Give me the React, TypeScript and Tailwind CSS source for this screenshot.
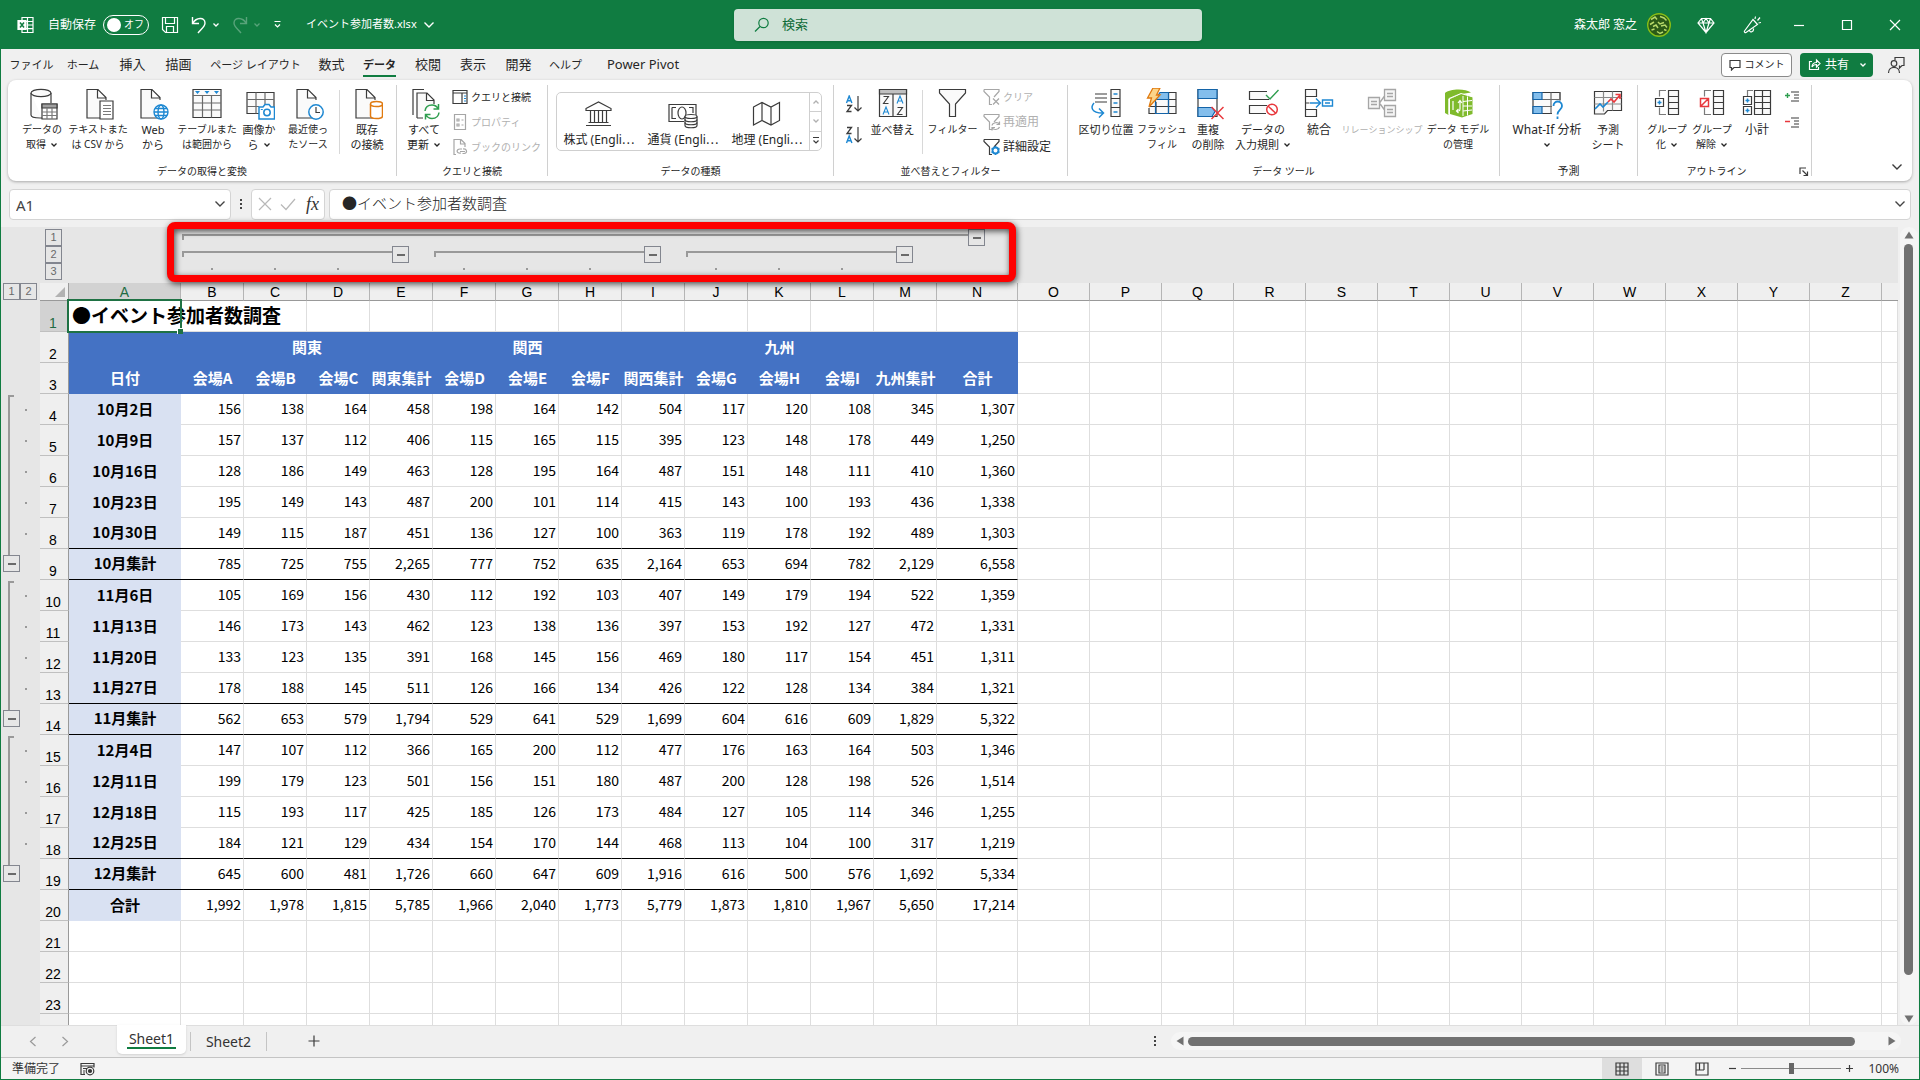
import React, { useState } from 'react';

type IconProps = { children: React.ReactNode; w?: number; h?: number; dx?: number; className?: string };

const Svg: React.FC<IconProps> = ({ children, w = 32, h = 32, dx = 0, className = '' }) => (
  <svg width={w} height={h} viewBox={`${-dx} 0 ${w} ${h}`} fill="none" stroke="#3b3b3b" strokeWidth="1.2" className={`shrink-0 ${className}`} aria-hidden="true">
    {children}
  </svg>
);

const Chevron: React.FC<{ className?: string; big?: boolean }> = ({ className = '', big }) =>
  big ? (
    <svg width="12" height="8" viewBox="0 0 12 8" fill="none" stroke="currentColor" strokeWidth="1.4" className={`shrink-0 ${className}`} aria-hidden="true">
      <path d="M1.5 1.5 6 6l4.500-4.500" />
    </svg>
  ) : (
    <svg width="8" height="6" viewBox="0 0 8 6" fill="none" stroke="currentColor" strokeWidth="1.3" className={`shrink-0 ${className}`} aria-hidden="true">
      <path d="M1.500 1.500 4 4l2.500-2.500" />
    </svg>
  );

const Doc = () => <path d="M20 30H2V1.500h11l8 8V12M12.500 1.500V10H21" fill="#fafafa" />;

const BigIcons = {
  getData: (
    <Svg dx={1}>
      <path d="M4 5v22c0 2 4 3 9 3h2M24 5v10" fill="#fafafa" />
      <ellipse cx="14" cy="5" rx="10" ry="3.700" fill="#fafafa" />
      <path d="M15 16h15v15H15z" fill="#fff" />
      <path d="M15 16h15v4H15z" fill="#a0a0a0" />
      <path d="M20 20v11M25 20v11M15 24h15M15 27.500h15" stroke="#7a7a7a" />
    </Svg>
  ),
  text: (
    <Svg dx={3}>
      <Doc />
      <path d="M15 13h13v18H15z" fill="#fff" />
      <path d="M18 17.500h8M18 20.500h8M18 23.500h8M18 26.500h8" stroke="#7a7a7a" />
    </Svg>
  ),
  web: (
    <Svg dx={2}>
      <Doc />
      <g stroke="#1e88d2" strokeWidth="1.400">
        <circle cx="22" cy="24" r="7" fill="#fff" />
        <ellipse cx="22" cy="24" rx="3" ry="7" />
        <path d="M15 24h14M16 20.500h12M16 27.500h12" />
      </g>
    </Svg>
  ),
  table: (
    <Svg>
      <path d="M2 1.500h28v28H2z" fill="#fafafa" />
      <path d="M2 7.500h28M2 15h28M2 22h28M11.500 7.500v22M20.500 7.500v22" stroke="#6a6a6a" />
      <path d="M4 3h5L6.500 6zM13.500 3h5L16 6zM23 3h5l-2.500 3z" fill="#1e88d2" stroke="none" />
    </Svg>
  ),
  picture: (
    <Svg dx={2}>
      <path d="M2 4.500h27v21H2z" fill="#fafafa" />
      <path d="M2 11.500h27M2 18.500h12M11 4.500v21M20 4.500v12" stroke="#6a6a6a" />
      <path d="M14 19h4l2-2.500h4l2 2.500h3.500v12H14z" fill="#fff" stroke="#1e88d2" strokeWidth="1.500" />
      <circle cx="22" cy="24.500" r="3.200" stroke="#1e88d2" strokeWidth="1.500" />
      <path d="M15.800 21.500h2" stroke="#1e88d2" />
    </Svg>
  ),
  recent: (
    <Svg dx={3}>
      <Doc />
      <circle cx="21" cy="24" r="7.200" fill="#fff" stroke="#1e88d2" strokeWidth="1.500" />
      <path d="M21 19v5.500h4" />
    </Svg>
  ),
  existing: (
    <Svg dx={3}>
      <Doc />
      <path d="M16.500 16v12c0 1.500 2.500 2.500 6 2.500s6-1 6-2.500V16" fill="#fff" stroke="#e07a10" strokeWidth="1.500" />
      <ellipse cx="22.500" cy="16" rx="6" ry="2.500" fill="#fff" stroke="#e07a10" strokeWidth="1.500" />
    </Svg>
  ),
  refresh: (
    <Svg dx={2}>
      <path d="M3 27V1.500h11" />
      <path d="M7 30V5h10l7 7v4M7 30h6M16.500 5v7.500H24" fill="#fafafa" />
      <g stroke="#2f9e4f" strokeWidth="1.500">
        <path d="M15 23c.5-4 3.500-6 7-6 3 0 5 1.500 6.300 4M28.500 16v5h-5M29 24.500c-.5 4-3.500 6-7 6-3 0-5-1.500-6.300-4M15.500 31.500v-5h5" />
      </g>
    </Svg>
  ),
  sort: (
    <Svg>
      <path d="M2.500 1.500h27v27h-27z" fill="#fafafa" />
      <path d="M2.500 1.500h27V6h-27z" fill="#c0c0c0" />
      <path d="M16 6v22.500" />
      <g strokeWidth="1.100">
        <path d="M6.500 8.500h5l-5 7h5M20.500 19.500h5l-5 7h5" />
        <path d="m6 26.500 3-7.500 3 7.500M7 24h4M20 15.500 23 8l3 7.500M21 13h4" stroke="#1e88d2" />
      </g>
    </Svg>
  ),
  filter: (
    <Svg>
      <path d="M2.500 1.500h26V5l-10 11v12.500h-6V16L2.500 5z" fill="#fafafa" />
    </Svg>
  ),
  split: (
    <Svg>
      <path d="M5 6h12M5 10h12M5 14h12" />
      <path d="M21 1.500h9v27h-9zM21 10.500h9M21 19.500h9" fill="#fafafa" />
      <path d="M23.500 6h4M23.500 15h4M23.500 24h4" stroke="#1e88d2" strokeWidth="1.500" />
      <path d="M4 15c-3.500 4-3 10 8.500 10M9 20.500l4.500 4.500-4.500 4.500" stroke="#1e88d2" strokeWidth="1.500" />
    </Svg>
  ),
  flash: (
    <Svg>
      <path d="M3 20v5.500h27V4.500H14" fill="#fafafa" />
      <path d="M3 25.500h27M3 18.500h27M8 11.500h22M22.500 4.500v21M10 14v11.500" />
      <path d="M14 4.500h8.500v7H9z" fill="#83beec" stroke="#1464a8" />
      <path d="M9.500 11.500h13v14h-13z" stroke="#1464a8" />
      <path d="M7 0h7l-3.500 7H14L3 19l2.500-9H1.500z" fill="#fbd58a" stroke="#e07a10" strokeWidth="1.300" />
    </Svg>
  ),
  dup: (
    <Svg dx={2}>
      <path d="M4 1.500h19v27H4z" fill="#fff" />
      <path d="M4 1.500h19v9H4zM4 19.500h14l3 4-3 5H4z" fill="#83beec" stroke="#1464a8" />
      <path d="m17.500 19 12 12M29.500 19l-12 12" stroke="#e8383d" strokeWidth="1.500" />
    </Svg>
  ),
  validate: (
    <Svg>
      <path d="M20 3.500H2.500v8H22M20 17.500H2.500v8H19" fill="#fafafa" />
      <path d="m19 7 4 4L31.500 2" stroke="#2f9e4f" strokeWidth="1.400" />
      <circle cx="25" cy="21.500" r="5.300" fill="#fff" stroke="#e8383d" strokeWidth="1.500" />
      <path d="m21 18 8 7.500" stroke="#e8383d" strokeWidth="1.500" />
    </Svg>
  ),
  consolidate: (
    <Svg>
      <path d="M2.500 1.500h11v7h-11zM2.500 21.500h11v7h-11zM2.500 8.500v13" fill="#fafafa" />
      <path d="M2.500 15h4" stroke="#3b3b3b" />
      <path d="M7 15h10M13 10.500l4.500 4.500-4.500 4.500M19.500 12h10v6h-10zM22 15h5" stroke="#1e88d2" strokeWidth="1.400" />
    </Svg>
  ),
  relation: (
    <Svg>
      <g stroke="#a6a6a6" fill="#f5f5f5" strokeWidth="1.300">
        <path d="M2.500 9.500h11v11h-11zM18.500 1.500h11v11h-11zM18.500 17.500h11v11h-11zM13.500 15l5-7M13.500 15l5 7" />
        <path d="M5 13.500h6M5 16.500h6M21 5.500h6M21 8.500h6M21 21.500h6M21 24.500h6" />
      </g>
    </Svg>
  ),
  model: (
    <Svg dx={1}>
      <path d="M2 5C6 1 22 0 28 4.500L16 6.500 5.500 11v16L2 25z" fill="#7fba2c" stroke="none" />
      <path d="M7 11 19 5.500l10.500 3.500v17L19 29.500 7 26z" fill="#7fba2c" stroke="none" />
      <path d="M6 26.500v-16L18 5.500l12 3.500" stroke="#fff" strokeWidth="1" />
      <path d="M20 8v20M20 13.500l9-1M20 18h9M20 23l9-1M24.500 8.500v19" stroke="#fff" strokeWidth="1" />
      <path d="M10 13v9M13.500 23h2c1 0 1.500-1 1.500-2v-8M15 15l2-2.500 2 2.500M15.500 21l-2 2 2 2" stroke="#fff" strokeWidth="1.200" />
    </Svg>
  ),
  whatif: (
    <Svg>
      <path d="M2 4.500h27v21H2z" fill="#fafafa" />
      <path d="M2 11.500h27M2 18.500h27M20 4.500v21M29 4.500v21" stroke="#6a6a6a" />
      <path d="M2 4.500h9v7H2zM2 18.500h9v7H2z" fill="#83beec" stroke="#1464a8" />
      <path d="M21 12.500h11V32H21z" fill="#fff" stroke="none" />
      <path d="M22.500 18c0-6 8.500-6 8.500 0 0 4-4.500 4-4.500 8.500M26.500 28.500v2.500" stroke="#1e88d2" strokeWidth="1.800" />
    </Svg>
  ),
  forecast: (
    <Svg>
      <path d="M2.500 3.500h27v19h-14l-3 3.500h-10z" fill="#fafafa" />
      <path d="M2.500 9.500h27M2.500 16h27M11.500 3.500v20M20.500 3.500v19" stroke="#8a8a8a" />
      <path d="m3 21 5-5 3 3 5-5" stroke="#1e88d2" strokeWidth="1.600" />
      <path d="m16 14 3-3 3 3 6-7M23.500 6.500h4.500V11" stroke="#e8383d" strokeWidth="1.600" />
    </Svg>
  ),
  group: (
    <Svg w={28}>
      <path d="M13 2.500H6.500v6M13 26.500H6.500v-7" stroke="#7a7a7a" />
      <path d="M2.500 10.500h8v8h-8z" />
      <path d="M6.500 12.500v4M4.500 14.500h4" stroke="#1e88d2" strokeWidth="1.500" />
      <path d="M15.500 2.500h10v24h-10zM15.500 8.500h10M15.500 14.500h10M15.500 20.500h10" fill="#fafafa" />
    </Svg>
  ),
  ungroup: (
    <Svg w={28}>
      <path d="M13 2.500H6.500v6M13 26.500H6.500v-7" stroke="#7a7a7a" />
      <path d="M2.500 10.500h8v8h-8zM3 18l7-7" stroke="#e8383d" strokeWidth="1.500" />
      <path d="M15.500 2.500h10v24h-10zM15.500 8.500h10M15.500 14.500h10M15.500 20.500h10" fill="#fafafa" />
    </Svg>
  ),
  subtotal: (
    <Svg>
      <path d="M12 2.500H6.500v6" stroke="#7a7a7a" />
      <path d="M2.500 8.500h8v8h-8zM2.500 18.500h8v8h-8z" />
      <path d="M6.500 10.500v4M4.500 12.500h4M6.500 20.500v4M4.500 22.500h4" stroke="#1e88d2" strokeWidth="1.500" />
      <path d="M13.500 2.500h16v24h-16zM13.500 8.500h16M13.500 14.500h16M13.500 20.500h16M21.500 2.500v24" fill="#fafafa" />
    </Svg>
  ),
};

const SortIcon: React.FC<{ desc?: boolean }> = ({ desc }) => (
  <Svg w={18} h={18}>
    <path d="m1.500 8 2.700-7 2.700 7M2.500 5.700h3.500" stroke="#1e88d2" strokeWidth="1.400" transform={desc ? 'translate(0 9)' : undefined} />
    <path d="M2 10.500h4.500L2 16.500h4.500" strokeWidth="1.300" transform={desc ? 'translate(0 -9)' : undefined} />
    <path d="M13 1v15M9.500 12.500 13 16l3.500-3.500" />
  </Svg>
);

const FilterSmall: React.FC<{ kind: 'clear' | 'reapply' | 'adv' }> = ({ kind }) => (
  <Svg w={18} h={18}>
    <path d="M1 1.500h15v2l-5 5.500M1 1.500v2L6.500 9v7.500H9" stroke={kind === 'adv' ? '#3b3b3b' : '#a6a6a6'} />
    {kind === 'clear' && <path d="m10 10.500 6 6M16 10.500l-6 6" stroke="#a6a6a6" />}
    {kind === 'reapply' && <path d="M9 12.500c.5-3 6-4 7.500-1M16.500 8.500v3h-3M16.500 14c-1 3-6 3.500-7.500.5M9 17.500v-3h3" stroke="#a6a6a6" />}
    {kind === 'adv' && (
      <g stroke="#1e88d2">
        <circle cx="12.500" cy="12.500" r="3" strokeWidth="1.800" />
        <path d="M12.500 8v2M12.500 15v2M8.500 10.500l2 1M14.500 13.500l2 1M8.500 14.500l2-1M14.500 11.500l2-1" strokeWidth="1.500" />
      </g>
    )}
  </Svg>
);

const BigButton: React.FC<{
  icon: React.ReactNode;
  lines: string[];
  width: string;
  size?: string;
  menu?: boolean;
  disabled?: boolean;
}> = ({ icon, lines, width, size = 'text-[11px]', menu, disabled }) => (
  <button disabled={disabled} className={`flex shrink-0 flex-col items-center ${width} ${size} ${disabled ? 'text-[#b0b0b0]' : 'text-[#262626]'}`}>
    {icon}
    <span className="mt-0.5 flex flex-col items-center leading-[15px] whitespace-nowrap">
      {lines.map((line, i) => (
        <span key={i} className="flex h-[15px] items-center gap-1">
          {line}
          {menu && i === lines.length - 1 && <Chevron />}
        </span>
      ))}
    </span>
  </button>
);

const SmallButton: React.FC<{ icon: React.ReactNode; label: string; size?: string; disabled?: boolean }> = ({ icon, label, size = 'text-[10px]', disabled }) => (
  <button disabled={disabled} className={`flex h-[18px] items-center gap-0.5 whitespace-nowrap ${size} ${disabled ? 'text-[#b0b0b0]' : 'text-[#262626]'}`}>
    {icon}
    {label}
  </button>
);

const Group: React.FC<{ caption: string; pad?: string; size?: string; launcher?: boolean; children: React.ReactNode }> = ({
  caption,
  pad = '',
  size = 'text-[10px]',
  launcher,
  children,
}) => (
  <>
    <section className="flex shrink-0 flex-col pt-2">
      <div className={`flex h-[75px] items-start ${pad}`}>{children}</div>
      <div className={`relative h-4 text-center leading-4 text-[#262626] ${size} ${launcher ? 'pr-4' : ''}`}>
        {caption}
        {launcher && (
          <button aria-label="アウトラインの設定" className="absolute top-1 right-0.5">
            <Svg w={10} h={10}>
              <path d="M1 7V1h6M3.500 3.500l5 5M8.500 4.500v4h-4" />
            </Svg>
          </button>
        )}
      </div>
    </section>
    <div className="my-[5px] w-px shrink-0 bg-[#d0d0d0]" />
  </>
);

const InnerLine: React.FC<{ className?: string }> = ({ className = '' }) => <div className={`mt-0.5 h-16 w-px shrink-0 bg-[#d8d8d8] ${className}`} />;

const TitleBar = () => {
  const [autoSave, setAutoSave] = useState(false);
  return (
    <header className="flex h-[49px] shrink-0 items-center bg-[#107c41] text-white">
      <div className="flex flex-1 items-center pl-4 text-[12px]">
        <Svg w={18} h={18}>
          <g stroke="#fff">
            <path d="M5 4V1.500h11v15H5V14M10.500 1.500v15M5 5.500h11M11 9h5M5 12.700h11" />
            <path d="M1 4.500h8v9H1z" fill="#fff" />
            <path d="m3 6.500 4 5M7 6.500l-4 5" stroke="#107c41" strokeWidth="1.500" />
          </g>
        </Svg>
        <span className="ml-[13px]" id="autosave">自動保存</span>
        <button
          role="switch"
          aria-checked={autoSave}
          aria-labelledby="autosave"
          onClick={() => setAutoSave(!autoSave)}
          className="ml-[7px] flex h-5 w-[46px] items-center justify-between rounded-full border border-white pr-1 pl-[3px] text-[10px]"
        >
          <span className="size-3.5 rounded-full bg-white" />
          {autoSave ? 'オン' : 'オフ'}
        </button>
        <button aria-label="上書き保存" className="ml-3">
          <Svg w={18} h={18}>
            <path d="M1.500 1.500h15v15h-12l-3-3zM4.500 1.500v6h9v-6M5.500 16.500v-6h7v6" stroke="#fff" />
          </Svg>
        </button>
        <button aria-label="元に戻す" className="ml-3 flex items-center gap-1">
          <Svg w={17} h={18}>
            <path d="M1.500 1v6.500H8M2 7C5 1.500 14 .5 14 7c0 4-4 6-7 10" stroke="#fff" strokeWidth="1.400" />
          </Svg>
          <Chevron />
        </button>
        <button aria-label="やり直し" className="ml-3 flex items-center gap-1 text-[#58a37a]" disabled>
          <Svg w={17} h={18}>
            <path d="M14.500 1v6.500H8M14 7C11 1.500 2 .5 2 7c0 4 4 6 7 10" stroke="#58a37a" strokeWidth="1.400" />
          </Svg>
          <Chevron />
        </button>
        <button aria-label="クイック アクセスのカスタマイズ" className="ml-3">
          <Svg w={9} h={9}>
            <path d="M1.500 1.500h6M2 4.500 4.500 7 7 4.500" stroke="#fff" />
          </Svg>
        </button>
        <button className="ml-6 flex items-center gap-1.5 text-[11px]">
          イベント参加者数.xlsx <Chevron big />
        </button>
      </div>
      <label className="flex h-8 w-[468px] items-center gap-3 rounded bg-[#cfe2d7] pl-5 shadow-sm">
        <Svg w={16} h={16}>
          <circle cx="9.500" cy="6" r="4.700" stroke="#107c41" />
          <path d="m6 9.500-5 5" stroke="#107c41" />
        </Svg>
        <input aria-label="検索" placeholder="検索" className="min-w-0 flex-1 bg-transparent text-[13px] outline-none placeholder:text-[#0e6b38]" />
      </label>
      <div className="flex flex-1 items-center justify-end text-[12px]">
        <span>森太郎 窓之</span>
        <Svg w={24} h={24} className="ml-2.5">
          <circle cx="12" cy="12" r="12" fill="#2b5a17" stroke="none" />
          <g stroke="#b7d96a" strokeWidth="1.500">
            <path d="M4 6.500 8 4l2 2.500M13 3.500l4 1.500 2.500 2.500M3 11.500l4-2.500M11 9l2 2 4-1.500M6 13.500l3-1.500 2 3M14 13l4-1 2 2.500M4.500 17l3-1M10 18.500l3 2 3-1.500M17 16.500l2.500 1" />
          </g>
          <circle cx="12" cy="12" r="11.300" stroke="#86c01a" strokeWidth="1.400" />
        </Svg>
        <button aria-label="Premium" className="ml-[26px]">
          <Svg w={18} h={18}>
            <path d="M4.500 2.500h9L17 7l-8 9.500L1 7zM1 7h16M4.500 2.500 6 7l3 9.500L12 7l1.500-4.500M6 7l3-4.500L12 7" stroke="#fff" />
          </Svg>
        </button>
        <button aria-label="新機能" className="ml-7">
          <Svg w={18} h={18}>
            <path d="M1.500 15 10 3.500l4.500 5L3 16.500c-1 .5-2-.5-1.500-1.500zM6.500 14.500c.5 2.500 4.500 1.500 4-2M12 3l.5-2.500M14.500 4.500l2.500-3M15.500 7l2.500-.5" stroke="#fff" />
          </Svg>
        </button>
        <button aria-label="最小化" className="ml-8">
          <Svg w={12} h={12}>
            <path d="M1 6.500h10" stroke="#fff" />
          </Svg>
        </button>
        <button aria-label="元のサイズに戻す" className="ml-9">
          <Svg w={12} h={12}>
            <path d="M1.500 1.500h9v9h-9z" stroke="#fff" />
          </Svg>
        </button>
        <button aria-label="閉じる" className="mr-[18px] ml-9">
          <Svg w={12} h={12}>
            <path d="m1 1 10 10M11 1 1 11" stroke="#fff" />
          </Svg>
        </button>
      </div>
    </header>
  );
};

const ribbonTabs = [
  { label: 'ファイル', cls: 'w-[51px] text-[11px]' },
  { label: 'ホーム', cls: 'w-[52px] text-[11px]' },
  { label: '挿入', cls: 'w-[47px] text-[13px]' },
  { label: '描画', cls: 'w-[45px] text-[13px]' },
  { label: 'ページ レイアウト', cls: 'w-[109px] text-[11px]' },
  { label: '数式', cls: 'w-[43px] text-[13px]' },
  { label: 'データ', cls: 'w-[53px] text-[11px]' },
  { label: '校閲', cls: 'w-[44px] text-[13px]' },
  { label: '表示', cls: 'w-[46px] text-[13px]' },
  { label: '開発', cls: 'w-[45px] text-[13px]' },
  { label: 'ヘルプ', cls: 'w-[49px] text-[11px]' },
  { label: 'Power Pivot', cls: 'w-[106px] text-[13px]' },
];

const RibbonTabs = () => {
  const [active, setActive] = useState('データ');
  return (
    <nav className="flex h-[31px] shrink-0 items-center justify-between pr-3.5 pl-[5px] text-[#262626]">
      <div className="flex h-full">
        {ribbonTabs.map(t => (
          <button key={t.label} onClick={() => setActive(t.label)} className={`flex shrink-0 justify-center whitespace-nowrap ${t.cls}`}>
            <span className={`flex h-7 items-center border-b-2 pt-1.5 ${t.label === active ? 'border-[#107c41] font-bold' : 'border-transparent'}`}>{t.label}</span>
          </button>
        ))}
      </div>
      <div className="flex items-center">
        <button className="flex h-6 w-[71px] items-center justify-center gap-1 rounded border border-[#8a8a8a] bg-white text-[10px]">
          <Svg w={12} h={12}>
            <path d="M1 1.500h10v7H5L2.500 11V8.500H1z" />
          </Svg>
          コメント
        </button>
        <button className="ml-2 flex h-6 w-[73px] items-center rounded bg-[#107c41] pl-2 text-[12px] text-white">
          <Svg w={13} h={13}>
            <path d="M4 3.500H1.500v8h9V9M4 9c0-3 2-4.500 4.500-4.500V2L12 5.500 8.500 9V6.500C6.500 6.500 5 7 4 9z" stroke="#fff" />
          </Svg>
          <span className="ml-1">共有</span>
          <Chevron className="ml-2.5" />
        </button>
        <button aria-label="連絡先" className="ml-3.5">
          <Svg w={18} h={18}>
            <path d="M8 4V1.500h9v8h-2l-2.500 2.500V9.500" />
            <circle cx="7" cy="7.500" r="2.800" />
            <path d="M1.500 17c0-7.500 11-7.500 11 0" />
          </Svg>
        </button>
      </div>
    </nav>
  );
};

const Ribbon = () => (
  <div className="relative mx-[7px] flex h-[101px] shrink-0 overflow-hidden rounded-lg bg-white shadow-[0_1px_3px_rgba(0,0,0,0.3)]">
    <Group caption="データの取得と変換" pad="pl-1.5 pr-[9px]">
      <BigButton icon={BigIcons.getData} lines={['データの', '取得']} width="w-[56px]" size="text-[10px]" menu />
      <BigButton icon={BigIcons.text} lines={['テキストまた', 'は CSV から']} width="w-[56px]" size="text-[10px]" />
      <BigButton icon={BigIcons.web} lines={['Web', 'から']} width="w-[54px]" />
      <BigButton icon={BigIcons.table} lines={['テーブルまた', 'は範囲から']} width="w-[54px]" size="text-[10px]" />
      <BigButton icon={BigIcons.picture} lines={['画像か', 'ら']} width="w-[50px]" size="text-[11px]" menu />
      <BigButton icon={BigIcons.recent} lines={['最近使っ', 'たソース']} width="w-[48px]" size="text-[10px]" />
      <InnerLine className="mx-[7px]" />
      <BigButton icon={BigIcons.existing} lines={['既存', 'の接続']} width="w-[40px]" />
    </Group>
    <Group caption="クエリと接続">
      <BigButton icon={BigIcons.refresh} lines={['すべて', '更新']} width="w-[54px]" menu />
      <div className="flex w-[96px] flex-col gap-[7px] pl-px">
        <SmallButton
          label="クエリと接続"
          icon={
            <Svg w={17} h={16}>
              <path d="M1 1.500h14v13H1zM1 4h14" />
              <path d="M10 4v10.500" />
              <path d="M12 7h2M12 9.500h2M12 12h2" stroke="#1e88d2" />
            </Svg>
          }
        />
        <SmallButton
          disabled
          label="プロパティ"
          icon={
            <Svg w={17} h={16}>
              <path d="M2.500.5h11v15h-11z" stroke="#a6a6a6" />
              <path d="M5 5h2v2H5zM5 10h2v2H5zM9.500 6h2M9.500 11h2" stroke="#a6a6a6" />
            </Svg>
          }
        />
        <SmallButton
          disabled
          label="ブックのリンク"
          icon={
            <Svg w={17} h={16}>
              <path d="M4 15.500H2V.5h7l4 4V8M8.500.5V5H13" stroke="#a6a6a6" />
              <path d="M9 14c-5 1-5-4-1-4h2M11 10c4-.5 5 4 1 4.500h-1.500M8 12.500h5" stroke="#a6a6a6" />
            </Svg>
          }
        />
      </div>
    </Group>
    <Group caption="データの種類" pad="pl-2 pr-[11px]">
      <div className="mt-1 flex h-[59px] w-[266px] rounded-[5px] border border-[#cfcfcf]">
        {[
          {
            label: '株式 (Engli',
            icon: <path d="M2 7.500 14.500 1 27 7.500v2H2zM2 24.500h25M4.500 21.500h20M6.500 10v11M10.500 10v11M14.500 10v11M18.500 10v11M22.500 10v11" />,
          },
          {
            label: '通貨 (Engli',
            icon: (
              <>
                <path d="M16 20.500H1v-17h27V14M4 6.500h4M21 6.500h4V12M4 6.500v11h4" />
                <ellipse cx="14" cy="12" rx="4" ry="6" />
                <path d="M17 15.500v9c0 3 12 3 12 0v-9" fill="#fff" />
                <ellipse cx="23" cy="15.500" rx="6" ry="2" fill="#fff" />
                <path d="M17 18.500c0 3 12 3 12 0M17 21.500c0 3 12 3 12 0" />
              </>
            ),
          },
          {
            label: '地理 (Engli',
            icon: <path d="m1.500 6 8.500-4.500L19 6l8.500-4.500v18L19 24l-9-4.500L1.500 24zM10 1.500v18M19 6v18" />,
          },
        ].map(item => (
          <button key={item.label} className="flex w-[84px] shrink-0 flex-col items-center pt-2 text-[12px] text-[#262626]">
            <Svg w={30} h={28}>
              {item.icon}
            </Svg>
            <span className="mt-0.5 leading-4 whitespace-nowrap">
              {item.label}
              <span className="font-['Noto_Sans_CJK_JP',sans-serif]">…</span>
            </span>
          </button>
        ))}
        <div className="flex w-3 flex-col divide-y divide-[#cfcfcf] border-l border-[#cfcfcf]">
          <button aria-label="上へ" className="flex flex-1 items-center justify-center text-[#b0b0b0]">
            <Chevron className="rotate-180" />
          </button>
          <button aria-label="下へ" className="flex flex-1 items-center justify-center text-[#b0b0b0]">
            <Chevron />
          </button>
          <button aria-label="その他" className="flex flex-1 items-center justify-center">
            <Svg w={8} h={9}>
              <path d="M1 1.500h6M1.500 4.500 4 7l2.500-2.500" />
            </Svg>
          </button>
        </div>
      </div>
    </Group>
    <Group caption="並べ替えとフィルター" pad="pl-[11px]">
      <div className="flex w-[18px] flex-col gap-[13px] pt-[7px]">
        <button aria-label="昇順">
          <SortIcon />
        </button>
        <button aria-label="降順">
          <SortIcon desc />
        </button>
      </div>
      <BigButton icon={BigIcons.sort} lines={['並べ替え']} width="w-[59px]" />
      <InnerLine />
      <BigButton icon={BigIcons.filter} lines={['フィルター']} width="w-[59px]" size="text-[10px]" />
      <div className="flex w-[85px] flex-col gap-[7px] pl-px">
        <SmallButton disabled label="クリア" icon={<FilterSmall kind="clear" />} />
        <SmallButton disabled label="再適用" size="text-[12px]" icon={<FilterSmall kind="reapply" />} />
        <SmallButton label="詳細設定" size="text-[12px]" icon={<FilterSmall kind="adv" />} />
      </div>
    </Group>
    <Group caption="データ ツール" pad="pl-[5px] pr-1">
      <BigButton icon={BigIcons.split} lines={['区切り位置']} width="w-[66px]" />
      <BigButton icon={BigIcons.flash} lines={['フラッシュ', 'フィル']} width="w-[46px]" size="text-[10px]" />
      <BigButton icon={BigIcons.dup} lines={['重複', 'の削除']} width="w-[46px]" />
      <BigButton icon={BigIcons.validate} lines={['データの', '入力規則']} width="w-[64px]" size="text-[11px]" menu />
      <BigButton icon={BigIcons.consolidate} lines={['統合']} width="w-[48px]" size="text-[12px]" />
      <BigButton icon={BigIcons.relation} lines={['リレーションシップ']} width="w-[78px]" size="text-[9px]" disabled />
      <BigButton icon={BigIcons.model} lines={['データ モデル', 'の管理']} width="w-[74px]" size="text-[10px]" />
    </Group>
    <Group caption="予測" pad="pl-[7px] pr-2" size="text-[11px]">
      <BigButton icon={BigIcons.whatif} lines={['What-If 分析', '']} width="w-[80px]" size="text-[12px]" menu />
      <BigButton icon={BigIcons.forecast} lines={['予測', 'シート']} width="w-[42px]" />
    </Group>
    <Group caption="アウトライン" pad="pl-1.5" launcher>
      <BigButton icon={BigIcons.group} lines={['グループ', '化']} width="w-[46px]" size="text-[10px]" menu />
      <BigButton icon={BigIcons.ungroup} lines={['グループ', '解除']} width="w-[44px]" size="text-[10px]" menu />
      <BigButton icon={BigIcons.subtotal} lines={['小計']} width="w-[46px]" size="text-[12px]" />
      <div className="flex w-[31px] flex-col gap-3 pt-0.5 pl-1">
        <button aria-label="詳細データの表示">
          <Svg w={16} h={14}>
            <path d="M7 2h8M10 5h5M10 8h5M7 11h8" />
            <path d="M3.500 3v5M1 5.500h5" stroke="#2f9e4f" strokeWidth="1.400" />
          </Svg>
        </button>
        <button aria-label="詳細を表示しない">
          <Svg w={16} h={14}>
            <path d="M7 2h8M10 5h5M10 8h5M7 11h8" />
            <path d="M1 5.500h5" stroke="#e8383d" strokeWidth="1.400" />
          </Svg>
        </button>
      </div>
    </Group>
    <button aria-label="リボンを折りたたむ" className="mt-auto mr-[9px] mb-2.5 ml-auto text-[#3b3b3b]">
      <Chevron big />
    </button>
  </div>
);

const FormulaBar = () => (
  <div className="flex h-[46px] shrink-0 items-center px-2">
    <label className="flex h-[31px] w-[222px] shrink-0 items-center rounded border border-[#d4d4d4] bg-white px-1.5">
      <input aria-label="名前ボックス" defaultValue="A1" className="w-0 flex-1 pt-0.5 text-[15px] text-[#444] outline-none" />
      <Chevron big className="-mr-0.5 text-[#444]" />
    </label>
    <Svg w={20} h={12}>
      <path d="M9 1h2v2H9zM9 5h2v2H9zM9 9h2v2H9z" fill="#444" stroke="none" />
    </Svg>
    <div className="flex h-[31px] w-[74px] shrink-0 items-center rounded border border-[#d4d4d4] bg-white pl-1.5">
      <button aria-label="キャンセル">
        <Svg w={14} h={14}>
          <path d="m1 1 12 12M13 1 1 13" stroke="#b8b8b8" />
        </Svg>
      </button>
      <button aria-label="入力" className="ml-2">
        <Svg w={16} h={14}>
          <path d="m1 7.500 5 5L15 2" stroke="#b8b8b8" />
        </Svg>
      </button>
      <button aria-label="関数の挿入" className="ml-2.5 font-['Liberation_Serif',serif] text-[18px] leading-5 text-[#333] italic">
        fx
      </button>
    </div>
    <label className="ml-1 flex h-[31px] flex-1 items-center rounded border border-[#d4d4d4] bg-white pr-1 pl-3">
      <input aria-label="数式バー" defaultValue="●イベント参加者数調査" className="w-0 flex-1 pb-0.5 font-['Noto_Sans_CJK_JP',sans-serif] text-[15px] leading-5 font-light text-[#262626] outline-none" />
      <Chevron big className="text-[#444]" />
    </label>
  </div>
);

const columns = 'ABCDEFGHIJKLMNOPQRSTUVWXYZ'.split('');
const venues = ['会場A', '会場B', '会場C', '関東集計', '会場D', '会場E', '会場F', '関西集計', '会場G', '会場H', '会場I', '九州集計', '合計'];
const records: string[][] = [
  ['10月2日', '156', '138', '164', '458', '198', '164', '142', '504', '117', '120', '108', '345', '1,307'],
  ['10月9日', '157', '137', '112', '406', '115', '165', '115', '395', '123', '148', '178', '449', '1,250'],
  ['10月16日', '128', '186', '149', '463', '128', '195', '164', '487', '151', '148', '111', '410', '1,360'],
  ['10月23日', '195', '149', '143', '487', '200', '101', '114', '415', '143', '100', '193', '436', '1,338'],
  ['10月30日', '149', '115', '187', '451', '136', '127', '100', '363', '119', '178', '192', '489', '1,303'],
  ['10月集計', '785', '725', '755', '2,265', '777', '752', '635', '2,164', '653', '694', '782', '2,129', '6,558'],
  ['11月6日', '105', '169', '156', '430', '112', '192', '103', '407', '149', '179', '194', '522', '1,359'],
  ['11月13日', '146', '173', '143', '462', '123', '138', '136', '397', '153', '192', '127', '472', '1,331'],
  ['11月20日', '133', '123', '135', '391', '168', '145', '156', '469', '180', '117', '154', '451', '1,311'],
  ['11月27日', '178', '188', '145', '511', '126', '166', '134', '426', '122', '128', '134', '384', '1,321'],
  ['11月集計', '562', '653', '579', '1,794', '529', '641', '529', '1,699', '604', '616', '609', '1,829', '5,322'],
  ['12月4日', '147', '107', '112', '366', '165', '200', '112', '477', '176', '163', '164', '503', '1,346'],
  ['12月11日', '199', '179', '123', '501', '156', '151', '180', '487', '200', '128', '198', '526', '1,514'],
  ['12月18日', '115', '193', '117', '425', '185', '126', '173', '484', '127', '105', '114', '346', '1,255'],
  ['12月25日', '184', '121', '129', '434', '154', '170', '144', '468', '113', '104', '100', '317', '1,219'],
  ['12月集計', '645', '600', '481', '1,726', '660', '647', '609', '1,916', '616', '500', '576', '1,692', '5,334'],
  ['合計', '1,992', '1,978', '1,815', '5,785', '1,966', '2,040', '1,773', '5,779', '1,873', '1,810', '1,967', '5,650', '17,214'],
];

// rows with a rule drawn under them
const ruled = [8, 9, 13, 14, 18, 19];

const OutlineBox: React.FC<{ children?: React.ReactNode; label?: string }> = ({ children, label }) => (
  <button aria-label={label} className="flex size-[17px] shrink-0 items-center justify-center border border-[#83868f] bg-[#e6e6e6] font-['Liberation_Sans',sans-serif] text-[11px] leading-none text-[#6a6a6a]">
    {children ?? <span className="h-0.5 w-2 bg-[#6a6a6a]" />}
  </button>
);

const ColumnOutline = () => (
  <div className="relative flex h-[56px] shrink-0 bg-[#e6e6e6] pt-0.5">
    <div className="ml-[44px] flex w-[136px] shrink-0 flex-col">
      <OutlineBox>1</OutlineBox>
      <OutlineBox>2</OutlineBox>
      <OutlineBox>3</OutlineBox>
    </div>
    <div>
      <div className="flex h-[17px]">
        <div className="mt-[5px] ml-px h-1.5 w-[786px] border-t-2 border-l-2 border-[#999]" />
        <OutlineBox label="折りたたむ" />
      </div>
      <div className="flex h-[17px]">
        {[0, 1, 2].map(g => (
          <div key={g} className="flex w-[252px]">
            <div className="mt-[5px] ml-px h-1.5 w-[210px] border-t-2 border-l-2 border-[#999]" />
            <OutlineBox label="折りたたむ" />
          </div>
        ))}
      </div>
      <div className="flex h-[17px]">
        {venues.slice(0, 12).map((v, i) => (
          <div key={v} className="flex w-[63px] justify-center pt-[5px] pr-0.5">
            {i % 4 !== 3 && <span className="size-0.5 bg-[#999]" />}
          </div>
        ))}
      </div>
    </div>
    <div className="absolute -top-[5px] left-[166px] z-10 h-[60px] w-[849px] rounded-lg border-[7px] border-[#fe0000] drop-shadow-[1px_2px_3px_rgba(0,0,0,0.7)]" />
  </div>
);

const RowOutline = () => (
  <div className="w-[39px] shrink-0 bg-[#e6e6e6]">
    <div className="flex h-[111px] pl-0.5">
      <OutlineBox>1</OutlineBox>
      <OutlineBox>2</OutlineBox>
    </div>
    {[5, 4, 4].map((n, g) => (
      <div key={g}>
        <div className="flex">
          <div className="mt-px ml-[7px] w-1.5 border-t-2 border-l-2 border-[#999]" />
          <div className="ml-[11px]">
            {Array.from({ length: n }, (_, i) => (
              <div key={i} className="flex h-[31px] items-center">
                <span className="size-0.5 bg-[#999]" />
              </div>
            ))}
          </div>
        </div>
        <div className="flex h-[31px]">
          <div className="ml-0.5 flex flex-col">
            <span className="ml-[5px] h-1.5 w-0.5 bg-[#999]" />
            <OutlineBox label="折りたたむ" />
          </div>
        </div>
      </div>
    ))}
  </div>
);

const grid = 'border-r border-b border-[#dedede]';
const blueHead = 'bg-[#4472c4] p-0 pb-0.5 text-[15px] leading-6 whitespace-nowrap text-white';

const Grid = () => (
  <table className="w-full table-fixed border-separate border-spacing-0 font-['Noto_Sans_CJK_JP',sans-serif] text-black">
    <colgroup>
      <col className="w-[29px]" />
      <col className="w-[112px]" />
      {columns.slice(1, 13).map(c => (
        <col key={c} className="w-[63px]" />
      ))}
      <col className="w-[81px]" />
      {columns.slice(14).map(c => (
        <col key={c} className="w-[72px]" />
      ))}
      <col />
    </colgroup>
    <thead>
      <tr className="h-[18px] bg-[#efefef] font-['Liberation_Sans',sans-serif] text-[14px] leading-4">
        <th className="border-r border-b border-[#999] p-0">
          <svg width="10" height="10" viewBox="0 0 10 10" className="mr-[3px] ml-auto" aria-hidden="true">
            <path d="M10 0v10H0z" fill="#b2b2b2" />
          </svg>
        </th>
        {columns.map(c => (
          <th key={c} className={`border-r border-b border-r-[#b5b5b5] border-b-[#999] p-0 pt-px font-normal ${c === 'A' ? 'bg-[#d2d2d2] text-[#1f6b43]' : ''}`}>
            {c}
          </th>
        ))}
        <th className="border-b border-[#999] p-0" />
      </tr>
    </thead>
    <tbody>
      {Array.from({ length: 24 }, (_, i) => i + 1).map(row => {
        const rec = records[row - 4];
        const line = ruled.includes(row) ? 'border-b-black' : '';
        return (
          <tr key={row} className="h-[31px]">
            <th
              className={`border-r border-b border-r-[#999] border-b-[#c0c0c0] p-0 pr-0.5 align-bottom font-['Liberation_Sans',sans-serif] text-[14px] leading-4 font-normal ${
                row === 1 ? 'bg-[#d2d2d2] text-[#1f6b43]' : 'bg-[#efefef]'
              }`}
            >
              {row < 24 && row}
            </th>
            {row === 1 && (
              <>
                <td className="relative p-0 pb-1 pl-[3px] text-[19px] leading-6 font-bold whitespace-nowrap">
                  ●イベント参加者数調査
                  <span className="absolute -top-0.5 -right-px -bottom-px -left-0.5 border-2 border-[#1f7244]" />
                  <span className="absolute -right-0.5 -bottom-0.5 size-1.5 border-t border-l border-white bg-[#1f7244]" />
                </td>
                <td className="border-b border-[#dedede]" />
                {columns.slice(2, 14).map(c => (
                  <td key={c} className={grid} />
                ))}
              </>
            )}
            {row === 2 && (
              <>
                <td className="bg-[#4472c4]" />
                <th colSpan={4} className={blueHead}>関東</th>
                <th colSpan={3} className={blueHead}>関西</th>
                <td className="bg-[#4472c4]" />
                <th colSpan={3} className={blueHead}>九州</th>
                <td className="bg-[#4472c4]" />
                <td className="bg-[#4472c4]" />
              </>
            )}
            {row === 3 &&
              ['日付', ...venues].map(v => (
                <th key={v} className={blueHead}>
                  {v}
                </th>
              ))}
            {rec && (
              <>
                <th className={`bg-[#d9e1f2] p-0 pb-0.5 text-[15px] leading-6 ${line ? 'border-b border-black' : ''}`}>{rec[0]}</th>
                {rec.slice(1).map((v, i) => (
                  <td key={i} className={`p-0 pr-0.5 pb-0.5 text-right text-[14px] leading-6 font-normal ${grid} ${line}`}>
                    {v}
                  </td>
                ))}
              </>
            )}
            {row > 20 && columns.slice(0, 14).map(c => <td key={c} className={grid} />)}
            {columns.slice(14).map(c => (
              <td key={c} className={grid} />
            ))}
            <td className={grid} />
          </tr>
        );
      })}
    </tbody>
  </table>
);

const Arrow: React.FC<{ className?: string }> = ({ className = '' }) => (
  <svg width="10" height="8" viewBox="0 0 10 8" className={`shrink-0 ${className}`} aria-hidden="true">
    <path d="M5 .5 9.500 7.500H.5z" fill="#717171" />
  </svg>
);

const SheetTabs = () => (
  <div className="flex h-[32px] shrink-0 items-start border-t border-[#dedede] text-[14px] text-[#333]">
    <button aria-label="前のシート" className="mt-2.5 ml-7">
      <Svg w={8} h={11}>
        <path d="M6.500 1 1.500 5.500l5 4.500" stroke="#9a9a9a" />
      </Svg>
    </button>
    <button aria-label="次のシート" className="mt-2.5 ml-6">
      <Svg w={8} h={11}>
        <path d="m1.500 1 5 4.500-5 4.500" stroke="#9a9a9a" />
      </Svg>
    </button>
    <button className="-mt-px ml-12 flex h-[29px] w-[69px] justify-center rounded-b-[5px] bg-white shadow-sm">
      <span className="flex h-6 items-center border-b-2 border-[#107c41] px-0.5 pt-1">Sheet1</span>
    </button>
    <div className="mt-1.5 ml-1 h-[19px] w-px bg-[#c4c4c4]" />
    <button className="mt-1.5 w-[75px] leading-5">Sheet2</button>
    <div className="mt-1.5 h-[19px] w-px bg-[#c4c4c4]" />
    <button aria-label="新しいシート" className="mt-[9px] ml-[41px]">
      <Svg w={12} h={12}>
        <path d="M6 .5v11M.5 6h11" />
      </Svg>
    </button>
    <div className="mt-1.5 mr-[18px] ml-auto flex items-center">
      <Svg w={4} h={12} className="mr-3.5">
        <path d="M1 1h2v2H1zM1 5h2v2H1zM1 9h2v2H1z" fill="#444" stroke="none" />
      </Svg>
      <div className="flex h-[18px] w-[38vw] items-center rounded-full bg-[#f5f5f5] px-1">
        <Arrow className="-rotate-90" />
        <div className="mr-8 ml-[3px] h-[9px] flex-1 rounded-full bg-[#717171]" />
        <Arrow className="rotate-90" />
      </div>
    </div>
  </div>
);

const StatusBar = () => (
  <footer className="flex h-[22px] shrink-0 items-center border-t border-[#c4c4c4] bg-[#f4f4f4] pl-[11px] text-[12px] text-[#333]">
    <span>準備完了</span>
    <button aria-label="マクロの記録" className="ml-5">
      <Svg w={15} h={14}>
        <path d="M5 12.500H1v-11h13v4M1 4h13M3 6.500h4M3 9h2M3 11h2" />
        <circle cx="10" cy="9" r="3.800" />
        <circle cx="10" cy="9" r="1.500" fill="#333" />
      </Svg>
    </button>
    <div className="ml-auto flex h-full items-center">
      <button aria-label="標準" className="flex h-full w-10 items-center justify-center bg-[#dedede]">
        <Svg w={14} h={14}>
          <path d="M1 1h12v12H1zM5 1v12M9 1v12M1 5h12M1 9h12" />
        </Svg>
      </button>
      <button aria-label="ページ レイアウト" className="flex h-full w-10 items-center justify-center">
        <Svg w={14} h={14}>
          <path d="M1 1h12v12H1zM4 3h6v8H4zM5.500 5h3M5.500 7h3M5.500 9h3" />
        </Svg>
      </button>
      <button aria-label="改ページ プレビュー" className="flex h-full w-10 items-center justify-center">
        <Svg w={14} h={14}>
          <path d="M1 1h12v12H1zM4.500 1v7M9 1v7M1 8h8" />
        </Svg>
      </button>
      <button aria-label="縮小" className="ml-1.5">
        <Svg w={9} h={9}>
          <path d="M1 4.500h7" />
        </Svg>
      </button>
      <input
        type="range"
        aria-label="ズーム"
        min={0}
        max={200}
        defaultValue={100}
        className="mx-1 h-3 w-[100px] appearance-none bg-[linear-gradient(#8a8a8a,#8a8a8a)] bg-[length:100%_1px] bg-center bg-no-repeat [&::-webkit-slider-thumb]:h-[11px] [&::-webkit-slider-thumb]:w-[5px] [&::-webkit-slider-thumb]:appearance-none [&::-webkit-slider-thumb]:bg-[#666]"
      />
      <button aria-label="拡大">
        <Svg w={9} h={9}>
          <path d="M1 4.500h7M4.500 1v7" />
        </Svg>
      </button>
      <span className="mr-5 ml-3.5">100%</span>
    </div>
  </footer>
);

const App: React.FC = () => (
  <div className="flex h-screen flex-col overflow-hidden border border-t-0 border-[#107c41] bg-[#f0f0f0] font-['Noto_Sans','Noto_Sans_CJK_JP',sans-serif]">
    <TitleBar />
    <RibbonTabs />
    <Ribbon />
    <FormulaBar />
    <main className="flex min-h-0 flex-1">
      <div className="flex min-w-0 flex-1 flex-col">
        <ColumnOutline />
        <div className="flex min-h-0 flex-1 overflow-hidden">
          <RowOutline />
          <div className="min-w-0 flex-1 bg-white">
            <Grid />
          </div>
        </div>
      </div>
      <div className="flex w-[21px] shrink-0 flex-col items-center">
        <div className="flex w-[18px] flex-1 flex-col items-center rounded-full bg-[#f5f5f5] pt-1 pb-0.5">
          <Arrow />
          <div className="mt-[5px] mb-10 w-[9px] flex-1 rounded-full bg-[#717171]" />
          <Arrow className="rotate-180" />
        </div>
      </div>
    </main>
    <SheetTabs />
    <StatusBar />
  </div>
);

export default App;
